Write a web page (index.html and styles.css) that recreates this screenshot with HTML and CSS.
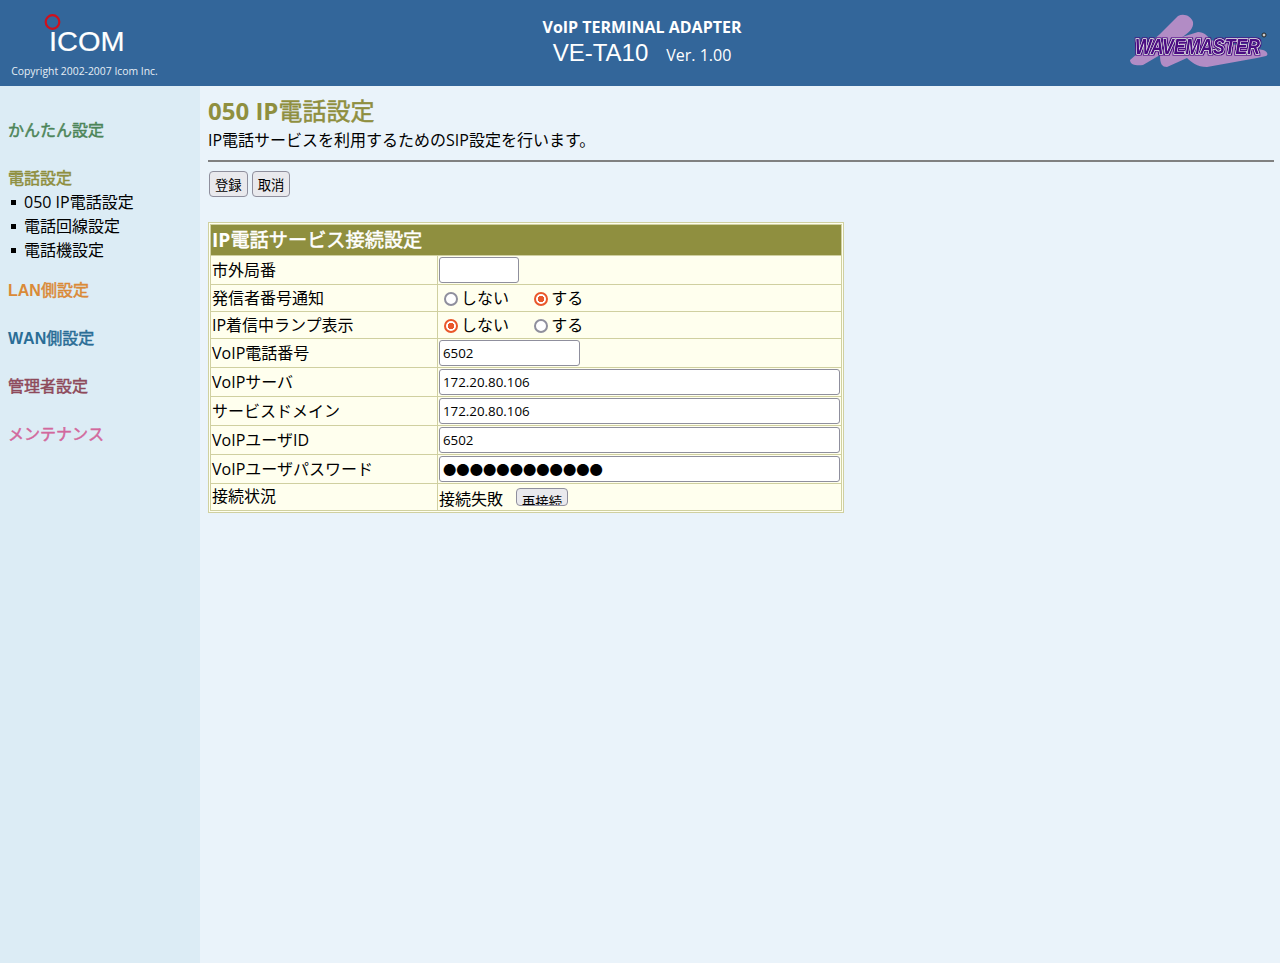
FILE: index.html
```html
<!DOCTYPE html>
<html lang="ja">
<head>
<meta charset="utf-8">
<title>VE-TA10</title>
<link rel="stylesheet" href="styles.css">
</head>
<body>
<header class="top">
  <div class="brand">
    <svg class="icom" width="84" height="40" viewBox="0 0 84 40">
      <circle cx="9.500" cy="9" r="6.800" fill="none" stroke="#d0101c" stroke-width="2.200"/>
      <text x="6" y="38" class="icom-text" textLength="75.500" lengthAdjust="spacingAndGlyphs">ICOM</text>
    </svg>
    <div class="copyright">Copyright 2002-2007 Icom Inc.</div>
  </div>
  <div class="title">
    <div class="title-small">VoIP TERMINAL ADAPTER</div>
    <div class="title-line"><span class="model">VE-TA10</span><span class="version">Ver. 1.00</span></div>
  </div>
  <svg class="wave" width="140" height="56" viewBox="0 0 140 56">
    <defs>
      <filter id="outline" x="-5%" y="-20%" width="110%" height="140%">
        <feMorphology in="SourceAlpha" operator="dilate" radius="0.800" result="fat"/>
        <feFlood flood-color="#4b0a82"/>
        <feComposite in2="fat" operator="in" result="edge"/>
        <feMerge><feMergeNode in="edge"/><feMergeNode in="SourceGraphic"/></feMerge>
      </filter>
    </defs>
    <path d="M1 47 L31 21 L49 3 C55 0 62 3 64 9 C65 15 60 20 53 24 L69 19 C75 19 79 23 81 27 L134 37 C138 38 140 42 137 43 L128 45 L78 54 C68 54 62 49 58 45 L38 54 C33 54 31 51 31 42 L14 52 C8 53 1 52 1 47 Z" fill="#b28cc5"/>
    <text x="6" y="41" class="wave-text" textLength="125" lengthAdjust="spacingAndGlyphs" filter="url(#outline)">WAVEMASTER</text>
    <circle cx="135" cy="22" r="2" fill="#ccc" stroke="#222"/>
  </svg>
</header>
<div class="body">
  <nav class="side">
    <div class="group green"><span class="jp">かんたん設定</span></div>
    <div class="group olive"><span class="jp">電話設定</span></div>
    <ul class="sub">
      <li>050 IP電話設定</li>
      <li>電話回線設定</li>
      <li>電話機設定</li>
    </ul>
    <div class="group orange">LAN<span class="jp">側設定</span></div>
    <div class="group blue">WAN<span class="jp">側設定</span></div>
    <div class="group maroon"><span class="jp">管理者設定</span></div>
    <div class="group pink"><span class="jp">メンテナンス</span></div>
  </nav>
  <main class="main">
    <h1 class="heading">050 IP<span class="jp">電話設定</span></h1>
    <p class="lead">IP電話サービスを利用するためのSIP設定を行います。</p>
    <hr class="rule">
    <div class="actions">
      <button class="btn" type="button">登録</button>
      <button class="btn" type="button">取消</button>
    </div>
    <table class="form">
      <colgroup><col class="col-label"><col></colgroup>
      <tr><th colspan="2">IP<span class="jp">電話サービス接続設定</span></th></tr>
      <tr class="r-in"><td class="label">市外局番</td><td><input class="field w-s" type="text"></td></tr>
      <tr class="r-radio"><td class="label">発信者番号通知</td><td>
        <label class="opt"><input type="radio" class="radio" name="a">しない</label>
        <label class="opt"><input type="radio" class="radio" name="a" checked>する</label>
      </td></tr>
      <tr class="r-radio"><td class="label">IP着信中ランプ表示</td><td>
        <label class="opt"><input type="radio" class="radio" name="b" checked>しない</label>
        <label class="opt"><input type="radio" class="radio" name="b">する</label>
      </td></tr>
      <tr class="r-in"><td class="label">VoIP電話番号</td><td><input class="field w-m" type="text" value="6502"></td></tr>
      <tr class="r-in"><td class="label">VoIPサーバ</td><td><input class="field w-l" type="text" value="172.20.80.106"></td></tr>
      <tr class="r-in"><td class="label">サービスドメイン</td><td><input class="field w-l" type="text" value="172.20.80.106"></td></tr>
      <tr class="r-in"><td class="label">VoIPユーザID</td><td><input class="field w-l" type="text" value="6502"></td></tr>
      <tr class="r-in"><td class="label">VoIPユーザパスワード</td><td><input class="field w-l" type="text" value="●●●●●●●●●●●●"></td></tr>
      <tr class="r-radio"><td class="label status-label">接続状況</td><td class="status">接続失敗<button class="btn-re" type="button"><span>再接続</span></button></td></tr>
    </table>
  </main>
</div>
</body>
</html>
```
FILE: styles.css
```css
* { box-sizing: border-box; }
html, body { margin: 0; height: 100%; }
body {
  font-family: "Open Sans", "Noto Sans CJK JP", sans-serif;
  font-size: 16px;
  color: #000;
  display: flex;
  flex-direction: column;
  height: 963px;
  overflow: hidden;
}
.jp { font-family: "Noto Sans CJK JP", sans-serif; font-weight: 400; line-height: 1; -webkit-text-stroke: .5px currentColor; }
.top {
  height: 86px;
  flex: none;
  background: #33669a;
  color: #fff;
  display: flex;
  align-items: flex-start;
}
.brand { width: 169px; flex: none; display: flex; flex-direction: column; align-items: center; }
.icom { margin-top: 13px; display: block; }
.icom-text { font: 400 27.500px "Liberation Sans", sans-serif; fill: #fff; stroke: #fff; stroke-width: .2px; }
.copyright { font-size: 10.400px; line-height: 14px; margin-top: 11px; color: #e6eef5; }
.title { flex: 1; text-align: center; padding-top: 16px; padding-right: 14px; }
.title-small { font-weight: 700; font-size: 16px; line-height: 22px; }
.title-line { line-height: 30px; padding-top: 1px; }
.model { font: 24px "Liberation Sans", sans-serif; }
.version { font-size: 16px; margin-left: 18px; }
.wave { flex: none; margin: 13px 11px 0 0; overflow: visible; }
.wave-text { font: italic 700 22.500px "Liberation Sans", sans-serif; fill: #4b0a82; stroke: #fff; stroke-width: 1.200px; paint-order: stroke; }
.body { flex: 1; display: flex; min-height: 0; }
.side { width: 200px; flex: none; background: #dcecf5; padding: 32px 8px 0; }
.group { font-weight: 700; font-size: 16px; line-height: 22px; padding-top: 2px; margin-bottom: 24px; font-family: "Liberation Sans", "Noto Sans CJK JP", sans-serif; font-kerning: none; }
.group.olive { margin-bottom: 0; }
.green { color: #4d8559; }
.olive { color: #8f8f3f; }
.orange { color: #da8a38; }
.blue { color: #2a6d96; }
.maroon { color: #8e4a5b; }
.pink { color: #d2689c; }
.sub { list-style: none; margin: 0 0 16px; padding: 0; }
.sub li { line-height: 24px; padding-left: 16px; position: relative; }
.sub li::before { content: ""; position: absolute; left: 3px; top: 10px; width: 5px; height: 5px; background: #000; }
.main { flex: 1; background: #eaf3fa; padding: 9px 6px 0 8px; }
.heading { margin: 0 0 1px; font-size: 24px; line-height: 32px; font-weight: 700; color: #8f8f3f; }
.lead { margin: 0; line-height: 24px; }
.rule { margin: 8px 0 9px; height: 2px; border: 0; background: #808080; }
.actions { display: flex; gap: 4px; padding-left: 1px; margin-bottom: 25px; }
.btn { height: 26px; padding: 0 5px; font: 13.333px "Open Sans", "Noto Sans CJK JP", sans-serif; background: #e9e9ed; border: 1px solid #8f8f9d; border-radius: 4px; color: #000; }
.form { width: 636px; border-collapse: separate; border-spacing: 1px; border: 1px solid #d0d0a0; background: #d0d0a0; padding: 1px; table-layout: fixed; box-shadow: inset 0 0 0 1px #fffff0; }
.col-label { width: 226px; }
.form th { background: #8f8f3f; color: #fff; font-size: 19.200px; font-weight: 700; line-height: 29px; height: 30px; padding: 0 1px 1px; text-align: left; }
.form td { background: #ffffee; padding: 0 1px; }
.label { line-height: 24px; }
.r-in td { height: 28px; }
.r-radio td { height: 26px; }
.opt { display: inline-flex; align-items: center; width: 86px; line-height: 24px; }
.radio { appearance: none; width: 14px; height: 14px; border: 2px solid #8f8f9d; border-radius: 50%; margin: 1px 3px 0 5px; background: #fff; transform: translateY(1px); }
.radio:checked { border-color: #e9572b; background: radial-gradient(circle, #e9572b 0 3px, #fff 3.500px); }
.field { display: block; height: 26px; padding: 1px 3px; border: 1px solid #8f8f9d; border-radius: 3px; background: #fff; font: 13.333px "Open Sans", "Noto Sans CJK JP", sans-serif; color: #000; }
.w-s { width: 80px; }
.w-m { width: 141px; }
.w-l { width: 401px; }
.form td.status-label { padding-bottom: 2px; }
.form td.status { padding-top: 4px; line-height: 22px; }
.btn-re { width: 52px; height: 18px; margin-left: 13px; padding: 0; overflow: hidden; vertical-align: top; background: #e9e9ed; border: 1px solid #8f8f9d; border-radius: 4px; font: 13.333px "Open Sans", "Noto Sans CJK JP", sans-serif; color: #000; }
.btn-re span { display: block; margin-top: 4px; line-height: 18px; }
```
